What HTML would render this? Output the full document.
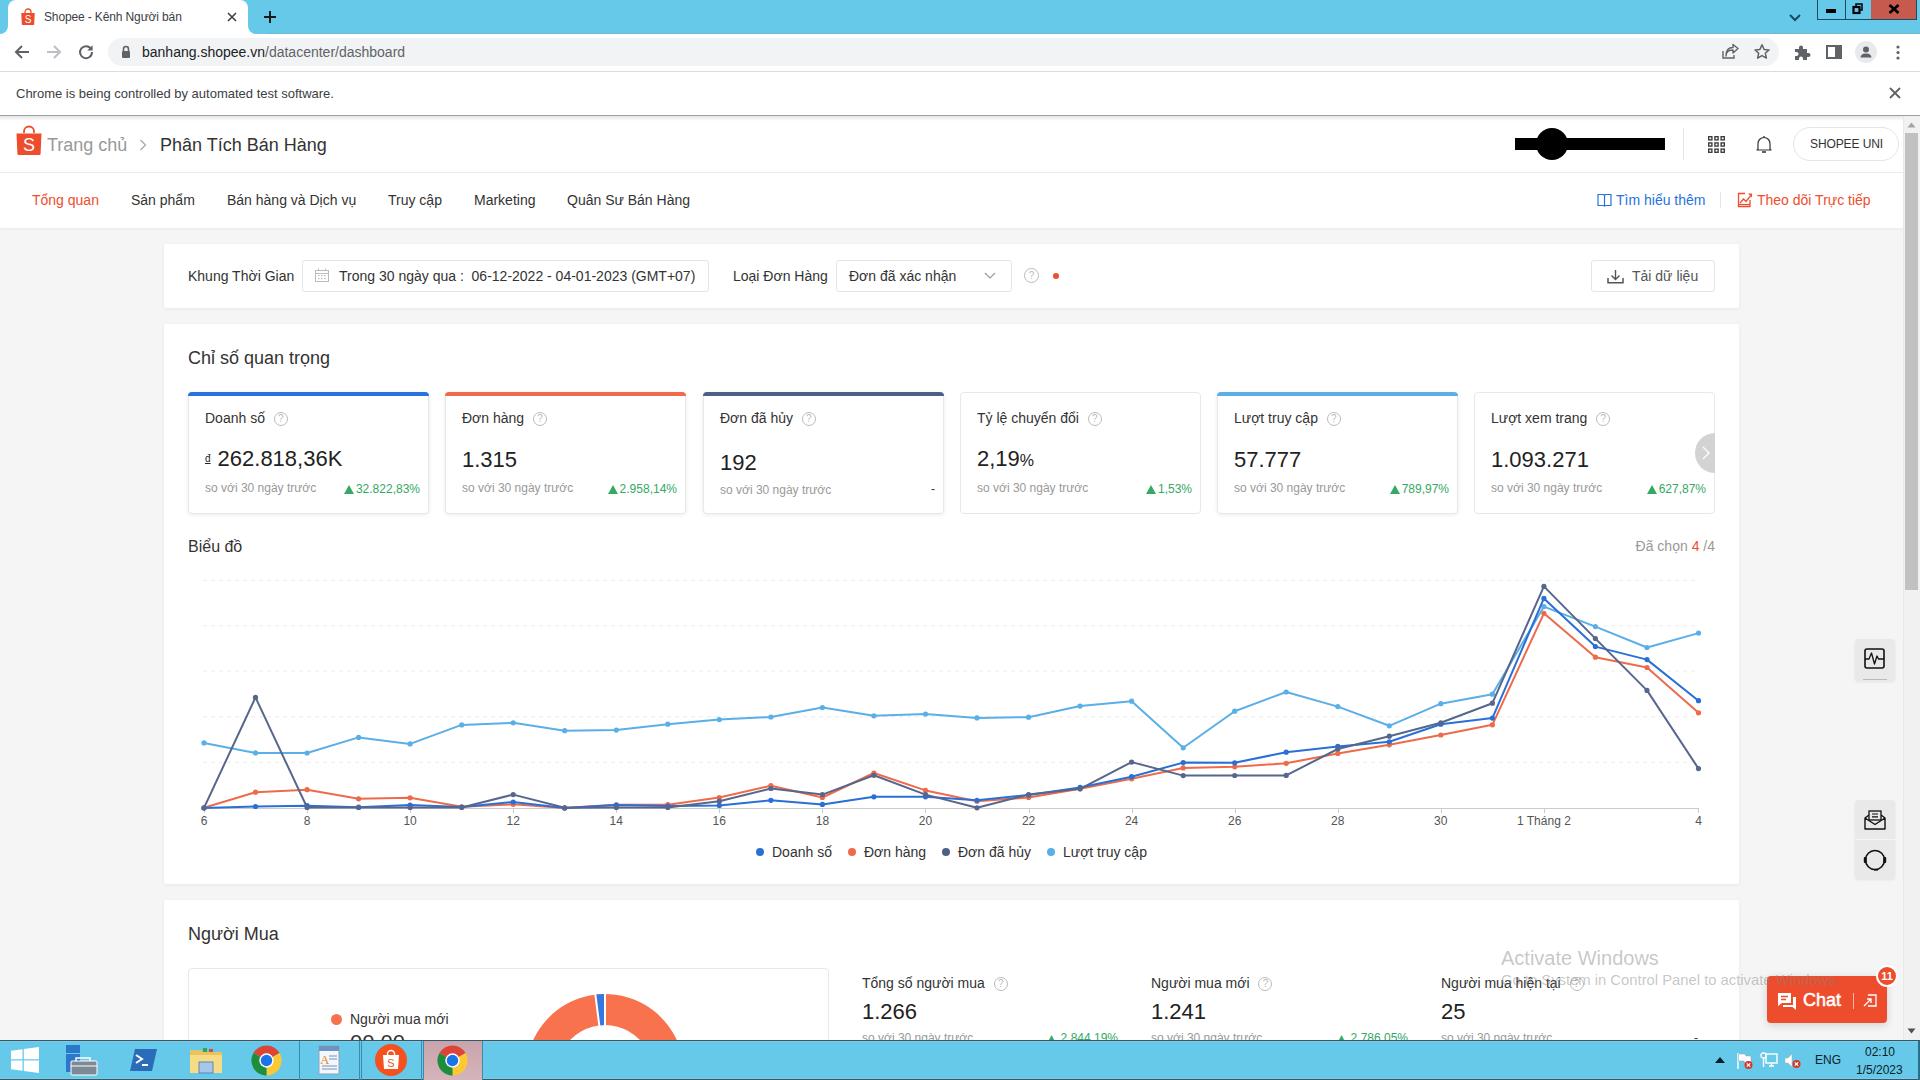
<!DOCTYPE html>
<html><head><meta charset="utf-8">
<style>
*{box-sizing:border-box;margin:0;padding:0}
html,body{width:1920px;height:1080px;overflow:hidden;background:#f5f5f5;font-family:"Liberation Sans",sans-serif;color:#333}
.a{position:absolute}
.t{position:absolute;white-space:nowrap;line-height:1}
svg{position:absolute;overflow:visible}
/* chrome */
#tabbar{left:0;top:0;width:1920px;height:34px;background:#67c9ea;border-bottom:1px solid #72b9cf}
#tab{left:8px;top:0;width:240px;height:34px;background:#fff;border-radius:8px 8px 0 0}
#addr{left:0;top:34px;width:1920px;height:37px;background:#fff}
#omni{left:108px;top:38px;width:1671px;height:28px;background:#f1f3f4;border-radius:14px}
#info{left:0;top:71px;width:1920px;height:45px;background:#fff;border-top:1px solid #dadce0;border-bottom:1px solid #a0a0a0}
/* page */
#hdr{left:0;top:116px;width:1903px;height:56px;background:#fff;box-shadow:0 1px 2px rgba(0,0,0,.06)}
#nav{left:0;top:173px;width:1903px;height:55px;background:#fff;box-shadow:0 1px 3px rgba(0,0,0,.05)}
.card{position:absolute;background:#fff;border-radius:2px;box-shadow:0 1px 4px rgba(0,0,0,.06)}
.mc{position:absolute;top:392px;width:241px;height:122px;background:#fff;border:1px solid #e8e8e8;border-radius:4px;box-shadow:0 1px 4px rgba(0,0,0,.08)}
.mc .bar{position:absolute;left:-1px;top:-1px;right:-1px;height:4px;border-radius:4px 4px 0 0}
.mc .tt{left:16px;top:18px;font-size:14px;color:#333}
.mc .v{left:16px;top:57px;font-size:22px;color:#222}
.mc .c{left:16px;top:89px;font-size:12px;color:#999}
.mc .p{right:8px;top:90px;font-size:12px;color:#35a864}
.q{display:inline-block;width:14px;height:14px;border:1px solid #bbb;border-radius:50%;font-size:10px;line-height:12px;text-align:center;color:#bbb;vertical-align:0px;margin-left:5px;position:relative;top:-1px}
#tb{left:0;top:1040px;width:1920px;height:40px;background:#67c9ea;border-top:1px solid #2e5a6a;border-bottom:1px solid #2e5a6a;box-shadow:inset 0 1px 0 #86c8e0, inset 0 -1px 0 #86c8e0}
</style></head><body>
<!-- CHROME FRAME -->
<div class="a" id="tabbar"></div>
<div class="a" style="left:0;top:24px;width:258px;height:10px;background:#fff"></div>
<div class="a" style="left:0;top:0;width:8px;height:34px;background:#67c9ea;border-bottom-right-radius:8px"></div>
<div class="a" style="left:248px;top:0;width:20px;height:34px;background:#67c9ea;border-bottom-left-radius:8px"></div>
<div class="a" id="tab"></div>
<svg style="left:20px;top:8px" width="16" height="18" viewBox="0 0 16 18"><path d="M5 5 V4 a3 3 0 0 1 6 0 V5" fill="none" stroke="#ee4d2d" stroke-width="1.3"/><path d="M1.3 5 H14.7 L14.2 16.3 Q14.1 17 13.4 17 H2.6 Q1.9 17 1.8 16.3 Z" fill="#ee4d2d"/><text x="8" y="14.6" font-size="10" font-family="Liberation Sans" fill="#fff" text-anchor="middle">S</text></svg>
<div class="t" style="left:44px;top:11px;font-size:12px;color:#3c4043;letter-spacing:-0.13px">Shopee - Kênh Người bán</div>
<svg style="left:227px;top:12px" width="10" height="10"><path d="M1 1L9 9M9 1L1 9" stroke="#3c4043" stroke-width="1.6"/></svg>
<svg style="left:263px;top:10px" width="14" height="14"><path d="M7 1V13M1 7H13" stroke="#1a1a1a" stroke-width="2"/></svg>
<svg style="left:1788px;top:13px" width="14" height="10"><path d="M2 2L7 7L12 2" fill="none" stroke="#1d4a5e" stroke-width="2"/></svg>
<div class="a" style="left:1817px;top:0;width:29px;height:20px;border:1px solid #1d4a5e;border-top:0"></div>
<div class="a" style="left:1845px;top:0;width:27px;height:20px;border:1px solid #1d4a5e;border-top:0;border-left:0"></div>
<div class="a" style="left:1871px;top:0;width:46px;height:20px;background:#c75a4e;border:1px solid #1d4a5e;border-top:0;border-left:0"></div>
<div class="a" style="left:1826px;top:9px;width:10px;height:4px;background:#000"></div>
<svg style="left:1852px;top:3px" width="12" height="12"><path d="M4 3V1H10V7H8" fill="none" stroke="#000" stroke-width="1.5"/><rect x="1.5" y="4" width="6" height="6" fill="none" stroke="#000" stroke-width="2.2"/></svg>
<svg style="left:1888px;top:4px" width="12" height="10"><path d="M1.5 1L10.5 9M10.5 1L1.5 9" stroke="#000" stroke-width="2.8"/></svg>
<div class="a" id="addr"></div>
<div class="a" id="omni"></div>
<svg style="left:14px;top:44px" width="16" height="16"><path d="M15 8H2M8 2L2 8L8 14" fill="none" stroke="#5f6368" stroke-width="2"/></svg>
<svg style="left:46px;top:44px" width="16" height="16"><path d="M1 8H14M8 2L14 8L8 14" fill="none" stroke="#bdc1c6" stroke-width="2"/></svg>
<svg style="left:78px;top:44px" width="16" height="16"><path d="M13.2 5.2A6 6 0 1 0 14 8" fill="none" stroke="#5f6368" stroke-width="2"/><path d="M14.6 1.2V6.6H9.2Z" fill="#5f6368"/></svg>
<svg style="left:121px;top:45px" width="10" height="13"><path d="M2.5 6V4a2.5 2.5 0 0 1 5 0V6" fill="none" stroke="#5f6368" stroke-width="1.6"/><rect x="1" y="6" width="8" height="7" rx="1" fill="#5f6368"/></svg>
<div class="t" style="left:142px;top:45px;font-size:14px;color:#202124">banhang.shopee.vn<span style="color:#5f6368">/datacenter/dashboard</span></div>
<svg style="left:1721px;top:44px" width="18" height="16"><path d="M2 7V14H13V11" fill="none" stroke="#5f6368" stroke-width="1.4"/><path d="M5 12C5 7 9 6 12 6V9L17 4.5L12 0.5V3.5C7 3.5 5 7 5 12Z" fill="none" stroke="#5f6368" stroke-width="1.4" stroke-linejoin="round"/></svg>
<svg style="left:1753px;top:43px" width="18" height="18"><path d="M9 1.8L11.1 6.4L16 6.9L12.3 10.2L13.4 15.1L9 12.6L4.6 15.1L5.7 10.2L2 6.9L6.9 6.4Z" fill="none" stroke="#5f6368" stroke-width="1.5" stroke-linejoin="round"/></svg>
<svg style="left:1794px;top:44px" width="17" height="16"><path d="M1 5H5V3.5a2 2 0 0 1 4 0V5H13V9H14.5a2 2 0 0 1 0 4H13V16H9V14.5a2 2 0 0 0-4 0V16H1V12H2.5a2 2 0 0 0 0-4H1Z" fill="#5f6368"/></svg>
<svg style="left:1826px;top:45px" width="16" height="14"><rect x="1" y="1" width="14" height="12" fill="none" stroke="#5f6368" stroke-width="2"/><rect x="9" y="1" width="6" height="12" fill="#5f6368"/></svg>
<div class="a" style="left:1855px;top:41px;width:22px;height:22px;border-radius:50%;background:#e8eaed"></div>
<svg style="left:1858px;top:44px" width="16" height="16"><circle cx="8" cy="5.5" r="3" fill="#5f6368"/><path d="M2.5 13.5C3 10 5.5 9.5 8 9.5S13 10 13.5 13.5Z" fill="#5f6368"/></svg>
<svg style="left:1896px;top:45px" width="4" height="15"><circle cx="2" cy="2" r="1.6" fill="#5f6368"/><circle cx="2" cy="7.5" r="1.6" fill="#5f6368"/><circle cx="2" cy="13" r="1.6" fill="#5f6368"/></svg>
<div class="a" id="info"></div>
<div class="t" style="left:16px;top:87px;font-size:13px;color:#3c4043">Chrome is being controlled by automated test software.</div>
<svg style="left:1889px;top:87px" width="12" height="12"><path d="M1 1L11 11M11 1L1 11" stroke="#5f6368" stroke-width="1.8"/></svg>

<!-- PAGE HEADER -->
<div class="a" id="hdr"></div>
<div class="a" style="left:0;top:116px;width:1903px;height:5px;background:linear-gradient(rgba(0,0,0,.10),rgba(0,0,0,0))"></div>
<svg style="left:16px;top:125px" width="26" height="31" viewBox="0 0 26 31"><path d="M8 8V6.5a5 5 0 0 1 10 0V8" fill="none" stroke="#ee4d2d" stroke-width="1.8"/><path d="M0.5 8.5H25.5L24.6 28.8Q24.5 30 23.3 30H2.7Q1.5 30 1.4 28.8Z" fill="#ee4d2d"/><text x="13" y="25.5" font-size="18" font-family="Liberation Sans" fill="#fff" text-anchor="middle">S</text></svg>
<div class="t" style="left:47px;top:136px;font-size:18px;color:#999">Trang chủ</div>
<svg style="left:139px;top:139px" width="8" height="12"><path d="M1.5 1L6.5 6L1.5 11" fill="none" stroke="#aaa" stroke-width="1.3"/></svg>
<div class="t" style="left:160px;top:136px;font-size:18px;color:#333">Phân Tích Bán Hàng</div>
<div class="a" style="left:1515px;top:138px;width:150px;height:12px;background:#000"></div>
<div class="a" style="left:1536px;top:128px;width:32px;height:32px;border-radius:50%;background:#000"></div>
<div class="a" style="left:1683px;top:128px;width:1px;height:32px;background:#e5e5e5"></div>
<svg style="left:1708px;top:136px" width="17" height="17"><g fill="none" stroke="#333" stroke-width="1.3"><rect x="0.7" y="0.7" width="3.2" height="3.2"/><rect x="6.9" y="0.7" width="3.2" height="3.2"/><rect x="13.1" y="0.7" width="3.2" height="3.2"/><rect x="0.7" y="6.9" width="3.2" height="3.2"/><rect x="6.9" y="6.9" width="3.2" height="3.2"/><rect x="13.1" y="6.9" width="3.2" height="3.2"/><rect x="0.7" y="13.1" width="3.2" height="3.2"/><rect x="6.9" y="13.1" width="3.2" height="3.2"/><rect x="13.1" y="13.1" width="3.2" height="3.2"/></g></svg>
<svg style="left:1756px;top:135px" width="16" height="19"><path d="M2 14V8.5a6 6 0 0 1 12 0V14L15 15H1Z" fill="none" stroke="#333" stroke-width="1.2" stroke-linejoin="round"/><path d="M8 1V2.5M6 17H10" stroke="#333" stroke-width="1.3"/></svg>
<div class="a" style="left:1793px;top:127px;width:106px;height:34px;border:1px solid #e5e5e5;border-radius:17px"></div>
<div class="t" style="left:1810px;top:138px;font-size:12px;color:#333;letter-spacing:-0.1px">SHOPEE UNI</div>
<div class="a" id="nav"></div>
<div class="t" style="left:32px;top:193px;font-size:14px;color:#ee4d2d">Tổng quan</div>
<div class="t" style="left:131px;top:193px;font-size:14px;color:#333">Sản phẩm</div>
<div class="t" style="left:227px;top:193px;font-size:14px;color:#333">Bán hàng và Dịch vụ</div>
<div class="t" style="left:388px;top:193px;font-size:14px;color:#333">Truy cập</div>
<div class="t" style="left:474px;top:193px;font-size:14px;color:#333">Marketing</div>
<div class="t" style="left:567px;top:193px;font-size:14px;color:#333">Quân Sư Bán Hàng</div>
<svg style="left:1597px;top:193px" width="15" height="14"><path d="M1 1.5H6.5L7.5 2.5L8.5 1.5H14V12.5H8.5L7.5 13L6.5 12.5H1Z M7.5 2.5V12.5" fill="none" stroke="#2673dd" stroke-width="1.2"/></svg>
<div class="t" style="left:1616px;top:193px;font-size:14px;color:#2673dd">Tìm hiểu thêm</div>
<div class="a" style="left:1720px;top:192px;width:1px;height:16px;background:#e5e5e5"></div>
<svg style="left:1737px;top:192px" width="16" height="16"><path d="M13 8V14.5H1.5V1.5H8" fill="none" stroke="#ee4d2d" stroke-width="1.3"/><path d="M3 11L6.5 7L9 9.5L13.5 4" fill="none" stroke="#ee4d2d" stroke-width="1.3"/><path d="M11 1.5H15V5.5Z" fill="#ee4d2d"/><path d="M1.5 12.5H13" stroke="#ee4d2d" stroke-width="1.2"/></svg>
<div class="t" style="left:1757px;top:193px;font-size:14px;color:#ee4d2d">Theo dõi Trực tiếp</div>

<!-- FILTER CARD -->
<div class="card" style="left:164px;top:244px;width:1575px;height:64px"></div>
<div class="t" style="left:188px;top:269px;font-size:14px;color:#333">Khung Thời Gian</div>
<div class="a" style="left:302px;top:260px;width:407px;height:32px;border:1px solid #e5e5e5;border-radius:3px"></div>
<svg style="left:315px;top:268px" width="15" height="15"><g fill="none" stroke="#bbb" stroke-width="1"><rect x="0.5" y="2.5" width="13" height="11"/><path d="M0.5 5.5H13.5M3.5 0.5V2.5M10.5 0.5V2.5"/></g><g fill="#bbb"><rect x="3" y="7" width="1.5" height="1.2"/><rect x="6" y="7" width="1.5" height="1.2"/><rect x="9" y="7" width="1.5" height="1.2"/><rect x="3" y="10" width="1.5" height="1.2"/><rect x="6" y="10" width="1.5" height="1.2"/><rect x="9" y="10" width="1.5" height="1.2"/></g></svg>
<div class="t" style="left:339px;top:269px;font-size:14px;color:#333">Trong 30 ngày qua :&nbsp; 06-12-2022 - 04-01-2023 (GMT+07)</div>
<div class="t" style="left:733px;top:269px;font-size:14px;color:#333">Loại Đơn Hàng</div>
<div class="a" style="left:836px;top:260px;width:176px;height:32px;border:1px solid #e5e5e5;border-radius:3px"></div>
<div class="t" style="left:849px;top:269px;font-size:14px;color:#333">Đơn đã xác nhận</div>
<svg style="left:984px;top:272px" width="12" height="8"><path d="M1 1L6 6L11 1" fill="none" stroke="#999" stroke-width="1.2"/></svg>
<div class="a" style="left:1024px;top:268px;width:15px;height:15px;border:1px solid #bbb;border-radius:50%;font-size:10px;line-height:13px;text-align:center;color:#bbb">?</div>
<div class="a" style="left:1053px;top:273px;width:6px;height:6px;border-radius:50%;background:#ee4d2d"></div>
<div class="a" style="left:1591px;top:260px;width:124px;height:32px;border:1px solid #e5e5e5;border-radius:3px"></div>
<svg style="left:1607px;top:269px" width="17" height="15"><path d="M8.5 1V10M4.5 6.5L8.5 10.5L12.5 6.5" fill="none" stroke="#555" stroke-width="1.4"/><path d="M1 9V13.8H16V9" fill="none" stroke="#555" stroke-width="1.5"/></svg>
<div class="t" style="left:1632px;top:269px;font-size:14px;color:#555">Tải dữ liệu</div>

<!-- MAIN CARD -->
<div class="card" style="left:164px;top:324px;width:1575px;height:560px"></div>
<div class="t" style="left:188px;top:349px;font-size:18px;color:#333">Chỉ số quan trọng</div>
<div class="mc" style="left:188px"><div class="bar" style="background:#2673dd"></div><div class="t tt">Doanh số <span class="q">?</span></div><div class="t v" style="top:55px"><span style="font-size:10px;vertical-align:4px;text-decoration:underline;margin-right:7px">đ</span>262.818,36K</div><div class="t c" style="top:89px">so với 30 ngày trước</div><div class="t p"><span style="display:inline-block;width:0;height:0;border-left:5px solid transparent;border-right:5px solid transparent;border-bottom:9px solid #35a864;margin-right:2px;vertical-align:-1px"></span>32.822,83%</div></div>
<div class="mc" style="left:445px"><div class="bar" style="background:#ee6a4a"></div><div class="t tt">Đơn hàng <span class="q">?</span></div><div class="t v" style="top:56px">1.315</div><div class="t c" style="top:89px">so với 30 ngày trước</div><div class="t p"><span style="display:inline-block;width:0;height:0;border-left:5px solid transparent;border-right:5px solid transparent;border-bottom:9px solid #35a864;margin-right:2px;vertical-align:-1px"></span>2.958,14%</div></div>
<div class="mc" style="left:703px"><div class="bar" style="background:#4e5f85"></div><div class="t tt">Đơn đã hủy <span class="q">?</span></div><div class="t v" style="top:59px">192</div><div class="t c" style="top:91px">so với 30 ngày trước</div><div class="t p" style="color:#333">-</div></div>
<div class="mc" style="left:960px;box-shadow:none"><div class="t tt">Tỷ lệ chuyển đổi <span class="q">?</span></div><div class="t v" style="top:55px">2,19<span style="font-size:16px">%</span></div><div class="t c" style="top:89px">so với 30 ngày trước</div><div class="t p"><span style="display:inline-block;width:0;height:0;border-left:5px solid transparent;border-right:5px solid transparent;border-bottom:9px solid #35a864;margin-right:2px;vertical-align:-1px"></span>1,53%</div></div>
<div class="mc" style="left:1217px"><div class="bar" style="background:#5aafe6"></div><div class="t tt">Lượt truy cập <span class="q">?</span></div><div class="t v" style="top:56px">57.777</div><div class="t c" style="top:89px">so với 30 ngày trước</div><div class="t p"><span style="display:inline-block;width:0;height:0;border-left:5px solid transparent;border-right:5px solid transparent;border-bottom:9px solid #35a864;margin-right:2px;vertical-align:-1px"></span>789,97%</div></div>
<div class="mc" style="left:1474px;box-shadow:none"><div class="t tt">Lượt xem trang <span class="q">?</span></div><div class="t v" style="top:56px">1.093.271</div><div class="t c" style="top:89px">so với 30 ngày trước</div><div class="t p"><span style="display:inline-block;width:0;height:0;border-left:5px solid transparent;border-right:5px solid transparent;border-bottom:9px solid #35a864;margin-right:2px;vertical-align:-1px"></span>627,87%</div></div>
<div class="a" style="left:1695px;top:433px;width:20px;height:40px;overflow:hidden"><div class="a" style="left:0;top:0;width:40px;height:40px;border-radius:50%;background:#d3d3d3"></div><svg style="left:7px;top:13px" width="8" height="14"><path d="M1 1L7 7L1 13" fill="none" stroke="#fff" stroke-width="1.4"/></svg></div>
<div class="t" style="left:188px;top:539px;font-size:16px;color:#333">Biểu đồ</div>
<div class="t" style="right:205px;top:539px;font-size:14px;color:#999">Đã chọn <span style="color:#ee4d2d">4</span> /4</div>
<svg style="left:180px;top:560px" width="1560" height="280">
<line x1="23" y1="20.299999999999955" x2="1519" y2="20.299999999999955" stroke="#ececec" stroke-width="1" stroke-dasharray="4 4"/>
<line x1="23" y1="65.79999999999995" x2="1519" y2="65.79999999999995" stroke="#ececec" stroke-width="1" stroke-dasharray="4 4"/>
<line x1="23" y1="111.20000000000005" x2="1519" y2="111.20000000000005" stroke="#ececec" stroke-width="1" stroke-dasharray="4 4"/>
<line x1="23" y1="156.79999999999995" x2="1519" y2="156.79999999999995" stroke="#ececec" stroke-width="1" stroke-dasharray="4 4"/>
<line x1="23" y1="202.29999999999995" x2="1519" y2="202.29999999999995" stroke="#ececec" stroke-width="1" stroke-dasharray="4 4"/>
<line x1="23" y1="248.5" x2="1519" y2="248.5" stroke="#ccc" stroke-width="1"/>
<line x1="24.5" y1="248" x2="24.5" y2="253" stroke="#ccc"/>
<text x="24.0" y="265" font-size="12" fill="#555" text-anchor="middle" font-family="Liberation Sans">6</text>
<line x1="127.5" y1="248" x2="127.5" y2="253" stroke="#ccc"/>
<text x="127.1" y="265" font-size="12" fill="#555" text-anchor="middle" font-family="Liberation Sans">8</text>
<line x1="230.5" y1="248" x2="230.5" y2="253" stroke="#ccc"/>
<text x="230.1" y="265" font-size="12" fill="#555" text-anchor="middle" font-family="Liberation Sans">10</text>
<line x1="333.5" y1="248" x2="333.5" y2="253" stroke="#ccc"/>
<text x="333.2" y="265" font-size="12" fill="#555" text-anchor="middle" font-family="Liberation Sans">12</text>
<line x1="436.5" y1="248" x2="436.5" y2="253" stroke="#ccc"/>
<text x="436.3" y="265" font-size="12" fill="#555" text-anchor="middle" font-family="Liberation Sans">14</text>
<line x1="539.5" y1="248" x2="539.5" y2="253" stroke="#ccc"/>
<text x="539.3" y="265" font-size="12" fill="#555" text-anchor="middle" font-family="Liberation Sans">16</text>
<line x1="642.5" y1="248" x2="642.5" y2="253" stroke="#ccc"/>
<text x="642.4" y="265" font-size="12" fill="#555" text-anchor="middle" font-family="Liberation Sans">18</text>
<line x1="745.5" y1="248" x2="745.5" y2="253" stroke="#ccc"/>
<text x="745.5" y="265" font-size="12" fill="#555" text-anchor="middle" font-family="Liberation Sans">20</text>
<line x1="849.5" y1="248" x2="849.5" y2="253" stroke="#ccc"/>
<text x="848.6" y="265" font-size="12" fill="#555" text-anchor="middle" font-family="Liberation Sans">22</text>
<line x1="952.5" y1="248" x2="952.5" y2="253" stroke="#ccc"/>
<text x="951.6" y="265" font-size="12" fill="#555" text-anchor="middle" font-family="Liberation Sans">24</text>
<line x1="1055.5" y1="248" x2="1055.5" y2="253" stroke="#ccc"/>
<text x="1054.7" y="265" font-size="12" fill="#555" text-anchor="middle" font-family="Liberation Sans">26</text>
<line x1="1158.5" y1="248" x2="1158.5" y2="253" stroke="#ccc"/>
<text x="1157.8" y="265" font-size="12" fill="#555" text-anchor="middle" font-family="Liberation Sans">28</text>
<line x1="1261.5" y1="248" x2="1261.5" y2="253" stroke="#ccc"/>
<text x="1260.8" y="265" font-size="12" fill="#555" text-anchor="middle" font-family="Liberation Sans">30</text>
<line x1="1364.5" y1="248" x2="1364.5" y2="253" stroke="#ccc"/>
<text x="1363.9" y="265" font-size="12" fill="#555" text-anchor="middle" font-family="Liberation Sans">1 Tháng 2</text>
<line x1="1518.5" y1="248" x2="1518.5" y2="253" stroke="#ccc"/>
<text x="1518.5" y="265" font-size="12" fill="#555" text-anchor="middle" font-family="Liberation Sans">4</text>
<g fill="#5aafe6"><polyline points="24.0,182.9 75.5,192.9 127.1,193.0 178.6,177.4 230.1,183.9 281.7,164.9 333.2,162.8 384.7,170.7 436.3,170.1 487.8,164.2 539.3,159.6 590.9,157.0 642.4,147.5 693.9,155.8 745.5,154.0 797.0,157.9 848.6,157.2 900.1,146.1 951.6,141.2 1003.2,187.8 1054.7,151.2 1106.2,132.0 1157.8,146.6 1209.3,165.8 1260.8,143.7 1312.4,134.2 1363.9,46.6 1415.4,66.6 1467.0,87.5 1518.5,73.1" fill="none" stroke="#5aafe6" stroke-width="2" stroke-linejoin="round"/><circle cx="24.0" cy="182.9" r="2.6"/><circle cx="75.5" cy="192.9" r="2.6"/><circle cx="127.1" cy="193.0" r="2.6"/><circle cx="178.6" cy="177.4" r="2.6"/><circle cx="230.1" cy="183.9" r="2.6"/><circle cx="281.7" cy="164.9" r="2.6"/><circle cx="333.2" cy="162.8" r="2.6"/><circle cx="384.7" cy="170.7" r="2.6"/><circle cx="436.3" cy="170.1" r="2.6"/><circle cx="487.8" cy="164.2" r="2.6"/><circle cx="539.3" cy="159.6" r="2.6"/><circle cx="590.9" cy="157.0" r="2.6"/><circle cx="642.4" cy="147.5" r="2.6"/><circle cx="693.9" cy="155.8" r="2.6"/><circle cx="745.5" cy="154.0" r="2.6"/><circle cx="797.0" cy="157.9" r="2.6"/><circle cx="848.6" cy="157.2" r="2.6"/><circle cx="900.1" cy="146.1" r="2.6"/><circle cx="951.6" cy="141.2" r="2.6"/><circle cx="1003.2" cy="187.8" r="2.6"/><circle cx="1054.7" cy="151.2" r="2.6"/><circle cx="1106.2" cy="132.0" r="2.6"/><circle cx="1157.8" cy="146.6" r="2.6"/><circle cx="1209.3" cy="165.8" r="2.6"/><circle cx="1260.8" cy="143.7" r="2.6"/><circle cx="1312.4" cy="134.2" r="2.6"/><circle cx="1363.9" cy="46.6" r="2.6"/><circle cx="1415.4" cy="66.6" r="2.6"/><circle cx="1467.0" cy="87.5" r="2.6"/><circle cx="1518.5" cy="73.1" r="2.6"/></g>
<g fill="#ee6a4a"><polyline points="24.0,247.8 75.5,232.2 127.1,229.7 178.6,238.8 230.1,237.8 281.7,246.8 333.2,244.3 384.7,248.0 436.3,244.8 487.8,244.7 539.3,237.5 590.9,225.7 642.4,237.5 693.9,213.0 745.5,230.4 797.0,241.2 848.6,237.5 900.1,228.8 951.6,218.8 1003.2,207.9 1054.7,206.8 1106.2,203.3 1157.8,193.4 1209.3,184.8 1260.8,175.0 1312.4,164.8 1363.9,53.3 1415.4,97.2 1467.0,107.5 1518.5,152.8" fill="none" stroke="#ee6a4a" stroke-width="2" stroke-linejoin="round"/><circle cx="24.0" cy="247.8" r="2.6"/><circle cx="75.5" cy="232.2" r="2.6"/><circle cx="127.1" cy="229.7" r="2.6"/><circle cx="178.6" cy="238.8" r="2.6"/><circle cx="230.1" cy="237.8" r="2.6"/><circle cx="281.7" cy="246.8" r="2.6"/><circle cx="333.2" cy="244.3" r="2.6"/><circle cx="384.7" cy="248.0" r="2.6"/><circle cx="436.3" cy="244.8" r="2.6"/><circle cx="487.8" cy="244.7" r="2.6"/><circle cx="539.3" cy="237.5" r="2.6"/><circle cx="590.9" cy="225.7" r="2.6"/><circle cx="642.4" cy="237.5" r="2.6"/><circle cx="693.9" cy="213.0" r="2.6"/><circle cx="745.5" cy="230.4" r="2.6"/><circle cx="797.0" cy="241.2" r="2.6"/><circle cx="848.6" cy="237.5" r="2.6"/><circle cx="900.1" cy="228.8" r="2.6"/><circle cx="951.6" cy="218.8" r="2.6"/><circle cx="1003.2" cy="207.9" r="2.6"/><circle cx="1054.7" cy="206.8" r="2.6"/><circle cx="1106.2" cy="203.3" r="2.6"/><circle cx="1157.8" cy="193.4" r="2.6"/><circle cx="1209.3" cy="184.8" r="2.6"/><circle cx="1260.8" cy="175.0" r="2.6"/><circle cx="1312.4" cy="164.8" r="2.6"/><circle cx="1363.9" cy="53.3" r="2.6"/><circle cx="1415.4" cy="97.2" r="2.6"/><circle cx="1467.0" cy="107.5" r="2.6"/><circle cx="1518.5" cy="152.8" r="2.6"/></g>
<g fill="#2a6fd6"><polyline points="24.0,248.0 75.5,246.5 127.1,245.7 178.6,247.2 230.1,245.0 281.7,247.0 333.2,242.0 384.7,248.0 436.3,245.0 487.8,246.0 539.3,245.4 590.9,240.3 642.4,244.4 693.9,236.8 745.5,236.8 797.0,240.3 848.6,235.0 900.1,227.4 951.6,216.7 1003.2,202.6 1054.7,202.8 1106.2,192.2 1157.8,186.4 1209.3,181.8 1260.8,164.2 1312.4,158.1 1363.9,38.4 1415.4,86.6 1467.0,99.6 1518.5,140.7" fill="none" stroke="#2a6fd6" stroke-width="2" stroke-linejoin="round"/><circle cx="24.0" cy="248.0" r="2.6"/><circle cx="75.5" cy="246.5" r="2.6"/><circle cx="127.1" cy="245.7" r="2.6"/><circle cx="178.6" cy="247.2" r="2.6"/><circle cx="230.1" cy="245.0" r="2.6"/><circle cx="281.7" cy="247.0" r="2.6"/><circle cx="333.2" cy="242.0" r="2.6"/><circle cx="384.7" cy="248.0" r="2.6"/><circle cx="436.3" cy="245.0" r="2.6"/><circle cx="487.8" cy="246.0" r="2.6"/><circle cx="539.3" cy="245.4" r="2.6"/><circle cx="590.9" cy="240.3" r="2.6"/><circle cx="642.4" cy="244.4" r="2.6"/><circle cx="693.9" cy="236.8" r="2.6"/><circle cx="745.5" cy="236.8" r="2.6"/><circle cx="797.0" cy="240.3" r="2.6"/><circle cx="848.6" cy="235.0" r="2.6"/><circle cx="900.1" cy="227.4" r="2.6"/><circle cx="951.6" cy="216.7" r="2.6"/><circle cx="1003.2" cy="202.6" r="2.6"/><circle cx="1054.7" cy="202.8" r="2.6"/><circle cx="1106.2" cy="192.2" r="2.6"/><circle cx="1157.8" cy="186.4" r="2.6"/><circle cx="1209.3" cy="181.8" r="2.6"/><circle cx="1260.8" cy="164.2" r="2.6"/><circle cx="1312.4" cy="158.1" r="2.6"/><circle cx="1363.9" cy="38.4" r="2.6"/><circle cx="1415.4" cy="86.6" r="2.6"/><circle cx="1467.0" cy="99.6" r="2.6"/><circle cx="1518.5" cy="140.7" r="2.6"/></g>
<g fill="#56668c"><polyline points="24.0,247.8 75.5,137.4 127.1,247.5 178.6,247.5 230.1,247.5 281.7,247.5 333.2,234.6 384.7,247.8 436.3,247.5 487.8,247.5 539.3,241.2 590.9,228.5 642.4,234.6 693.9,215.3 745.5,234.6 797.0,247.8 848.6,234.6 900.1,228.8 951.6,202.1 1003.2,215.6 1054.7,215.5 1106.2,215.4 1157.8,189.0 1209.3,176.2 1260.8,162.8 1312.4,143.2 1363.9,26.4 1415.4,78.6 1467.0,130.4 1518.5,208.6" fill="none" stroke="#56668c" stroke-width="2" stroke-linejoin="round"/><circle cx="24.0" cy="247.8" r="2.6"/><circle cx="75.5" cy="137.4" r="2.6"/><circle cx="127.1" cy="247.5" r="2.6"/><circle cx="178.6" cy="247.5" r="2.6"/><circle cx="230.1" cy="247.5" r="2.6"/><circle cx="281.7" cy="247.5" r="2.6"/><circle cx="333.2" cy="234.6" r="2.6"/><circle cx="384.7" cy="247.8" r="2.6"/><circle cx="436.3" cy="247.5" r="2.6"/><circle cx="487.8" cy="247.5" r="2.6"/><circle cx="539.3" cy="241.2" r="2.6"/><circle cx="590.9" cy="228.5" r="2.6"/><circle cx="642.4" cy="234.6" r="2.6"/><circle cx="693.9" cy="215.3" r="2.6"/><circle cx="745.5" cy="234.6" r="2.6"/><circle cx="797.0" cy="247.8" r="2.6"/><circle cx="848.6" cy="234.6" r="2.6"/><circle cx="900.1" cy="228.8" r="2.6"/><circle cx="951.6" cy="202.1" r="2.6"/><circle cx="1003.2" cy="215.6" r="2.6"/><circle cx="1054.7" cy="215.5" r="2.6"/><circle cx="1106.2" cy="215.4" r="2.6"/><circle cx="1157.8" cy="189.0" r="2.6"/><circle cx="1209.3" cy="176.2" r="2.6"/><circle cx="1260.8" cy="162.8" r="2.6"/><circle cx="1312.4" cy="143.2" r="2.6"/><circle cx="1363.9" cy="26.4" r="2.6"/><circle cx="1415.4" cy="78.6" r="2.6"/><circle cx="1467.0" cy="130.4" r="2.6"/><circle cx="1518.5" cy="208.6" r="2.6"/></g>
</svg>
<div class="a" style="left:756px;top:848px;width:8px;height:8px;border-radius:50%;background:#2a6fd6"></div>
<div class="t" style="left:772px;top:845px;font-size:14px;color:#333">Doanh số</div>
<div class="a" style="left:848px;top:848px;width:8px;height:8px;border-radius:50%;background:#ee6a4a"></div>
<div class="t" style="left:864px;top:845px;font-size:14px;color:#333">Đơn hàng</div>
<div class="a" style="left:942px;top:848px;width:8px;height:8px;border-radius:50%;background:#4e5f85"></div>
<div class="t" style="left:958px;top:845px;font-size:14px;color:#333">Đơn đã hủy</div>
<div class="a" style="left:1047px;top:848px;width:8px;height:8px;border-radius:50%;background:#5aafe6"></div>
<div class="t" style="left:1063px;top:845px;font-size:14px;color:#333">Lượt truy cập</div>

<!-- BUYER CARD -->
<div class="card" style="left:164px;top:900px;width:1575px;height:200px"></div>
<div class="t" style="left:188px;top:925px;font-size:18px;color:#333">Người Mua</div>
<div class="a" style="left:188px;top:968px;width:641px;height:120px;border:1px solid #e8e8e8;border-radius:4px"></div>
<div class="a" style="left:331px;top:1014px;width:11px;height:11px;border-radius:50%;background:#f8734d"></div>
<div class="t" style="left:350px;top:1012px;font-size:14px;color:#333">Người mua mới</div>
<div class="t" style="left:350px;top:1032px;font-size:22px;color:#333">00,00</div>
<svg style="left:520px;top:988px" width="170" height="170" viewBox="-85 -85 170 170"><path d="M0 -79A79 79 0 1 1 -0.01 -79L-0.01 -48A48 48 0 1 0 0 -48Z" fill="#f8734d"/><path d="M0 -79A79 79 0 0 0 -9.6 -78.4L-5.8 -47.6A48 48 0 0 1 0 -48Z" fill="#3478e0"/><path d="M0 -80V-46M-9.8 -79.5L-5.5 -46" stroke="#fff" stroke-width="2"/></svg>
<div class="t" style="left:862px;top:976px;font-size:14px;color:#333">Tổng số người mua <span class="q">?</span></div>
<div class="t" style="left:862px;top:1001px;font-size:22px;color:#222">1.266</div>
<div class="t" style="left:862px;top:1032px;font-size:12px;color:#999">so với 30 ngày trước</div>
<div class="t" style="right:802px;top:1032px;font-size:12px;color:#35a864">▲ 2.844,19%</div>
<div class="t" style="left:1151px;top:976px;font-size:14px;color:#333">Người mua mới <span class="q">?</span></div>
<div class="t" style="left:1151px;top:1001px;font-size:22px;color:#222">1.241</div>
<div class="t" style="left:1151px;top:1032px;font-size:12px;color:#999">so với 30 ngày trước</div>
<div class="t" style="right:512px;top:1032px;font-size:12px;color:#35a864">▲ 2.786,05%</div>
<div class="t" style="left:1694px;top:1032px;font-size:12px;color:#333">-</div>
<div class="t" style="left:1441px;top:976px;font-size:14px;color:#333">Người mua hiện tại <span class="q">?</span></div>
<div class="t" style="left:1441px;top:1001px;font-size:22px;color:#222">25</div>
<div class="t" style="left:1441px;top:1032px;font-size:12px;color:#999">so với 30 ngày trước</div>

<!-- SCROLLBAR -->
<div class="a" style="left:1903px;top:116px;width:17px;height:924px;background:#f1f1f1;border-left:1px solid #e8e8e8"></div>
<div class="a" style="left:1905px;top:133px;width:13px;height:457px;background:#c1c1c1"></div>
<svg style="left:1907px;top:122px" width="9" height="6"><path d="M0.5 5.5L4.5 0.5L8.5 5.5Z" fill="#a3a3a3"/></svg>
<svg style="left:1907px;top:1028px" width="9" height="6"><path d="M0.5 0.5L4.5 5.5L8.5 0.5Z" fill="#505050"/></svg>

<!-- FLOATING ICONS -->
<div class="a" style="left:1855px;top:639px;width:40px;height:42px;background:#e9e9e9;border-radius:4px;box-shadow:0 1px 3px rgba(0,0,0,.08)"></div>
<div class="a" style="left:1863px;top:679px;width:24px;height:1px;background:#bbb"></div>
<svg style="left:1864px;top:648px" width="21" height="21"><rect x="1" y="1" width="19" height="19" rx="2" fill="none" stroke="#111" stroke-width="1.6"/><path d="M1 11H5L7.5 5L10.5 16L13 8L14.5 11H20" fill="none" stroke="#111" stroke-width="1.3" stroke-linejoin="round"/></svg>
<div class="a" style="left:1855px;top:800px;width:40px;height:79px;background:#e9e9e9;border-radius:4px;box-shadow:0 1px 3px rgba(0,0,0,.08)"></div>
<svg style="left:1864px;top:810px" width="22" height="20"><path d="M1 8L5 5M17 5L21 8V19H1V8L11 14.5L21 8" fill="none" stroke="#111" stroke-width="1.4" stroke-linejoin="round"/><rect x="5" y="1" width="12" height="9" fill="#e9e9e9" stroke="#111" stroke-width="1.3"/><path d="M8 4H14M8 6.8H14" stroke="#111" stroke-width="1.2"/></svg>
<div class="a" style="left:1855px;top:839px;width:40px;height:1px;background:#f5f5f5"></div>
<svg style="left:1863px;top:848px" width="24" height="24"><circle cx="12" cy="12" r="9.5" fill="none" stroke="#111" stroke-width="1.6"/><rect x="0.8" y="9" width="3" height="6" rx="1" fill="#111"/><rect x="20.2" y="9" width="3" height="6" rx="1" fill="#111"/><path d="M11 21.8H15" stroke="#111" stroke-width="1.6"/></svg>

<!-- CHAT -->
<div class="a" style="left:1767px;top:976px;width:120px;height:47px;background:#ee4d2d;border-radius:4px;box-shadow:0 2px 8px rgba(0,0,0,.15)"></div>
<svg style="left:1777px;top:992px" width="20" height="19"><path d="M1 1H14V11H5L1 14Z" fill="#fff"/><path d="M16 5H19V18L15.5 15H6V13H16Z" fill="#fff"/><path d="M4 4.5H11M4 7.5H9" stroke="#ee4d2d" stroke-width="1.3"/></svg>
<div class="t" style="left:1803px;top:991px;font-size:18px;color:#fff;-webkit-text-stroke:0.5px #fff">Chat</div>
<div class="a" style="left:1853px;top:993px;width:1px;height:16px;background:rgba(255,255,255,.6)"></div>
<svg style="left:1863px;top:994px" width="14" height="13"><path d="M5 1H13V12H5" fill="none" stroke="#fff" stroke-width="1.3"/><path d="M1 12L8 5M4 5H8V9" fill="none" stroke="#fff" stroke-width="1.3"/></svg>
<div class="a" style="left:1876px;top:965px;width:22px;height:22px;border-radius:50%;background:#ee4d2d;border:2px solid #fff;color:#fff;font-size:11px;font-weight:bold;line-height:18px;text-align:center">11</div>

<!-- WATERMARK -->
<div class="t" style="left:1501px;top:948px;font-size:20px;color:rgba(130,130,130,.45)">Activate Windows</div>
<div class="t" style="left:1501px;top:973px;font-size:14.8px;color:rgba(130,130,130,.45)">Go to System in Control Panel to activate Windows.</div>

<!-- TASKBAR -->
<div class="a" id="tb"></div>
<svg style="left:11px;top:1047px" width="28" height="26"><path d="M0 3.8L11.5 2.2V12.3H0Z M12.8 2L28 0V12.3H12.8Z M0 13.6H11.5V23.8L0 22.2Z M12.8 13.6H28V26L12.8 24Z" fill="#fff"/></svg>
<svg style="left:64px;top:1044px" width="34" height="32"><rect x="2" y="1" width="14" height="8" fill="#2b77c9"/><rect x="2" y="10" width="14" height="18" fill="#2b77c9"/><rect x="7" y="17" width="26" height="14" rx="1" fill="#7d8a96" stroke="#fff" stroke-width="1"/><path d="M12 17V14H26V17" fill="none" stroke="#fff" stroke-width="1.5"/><path d="M7 22H33" stroke="#fff" stroke-width="1"/></svg>
<svg style="left:130px;top:1048px" width="28" height="24"><path d="M5 1H27L22 23H0Z" fill="#2a6cb8"/><path d="M6 7L12 11L6 15" fill="none" stroke="#fff" stroke-width="2"/><path d="M12 17H18" stroke="#fff" stroke-width="2"/></svg>
<svg style="left:189px;top:1046px" width="34" height="28"><path d="M1 4H12L14 6H33V27H1Z" fill="#e9c45e"/><rect x="1" y="9" width="32" height="18" fill="#f6dc85"/><rect x="10" y="16" width="14" height="11" fill="#a8c6e8" stroke="#5d87b8"/><rect x="14" y="2" width="4" height="4" fill="#3ca34a"/><rect x="20" y="3" width="4" height="3" fill="#d34b3c"/></svg>
<svg style="left:250px;top:1044px" width="33" height="33" viewBox="0 0 48 48"><path d="M24 24L4.95 13A22 22 0 0 1 43.05 13Z" fill="#db4437"/><path d="M24 24L43.05 13A22 22 0 0 1 24 46Z" fill="#fcc934"/><path d="M24 24L24 46A22 22 0 0 1 4.95 13Z" fill="#1e8e3e"/><circle cx="24" cy="24" r="10.5" fill="#fff"/><circle cx="24" cy="24" r="8.3" fill="#1a73e8"/></svg>
<div class="a" style="left:299px;top:1041px;width:1px;height:39px;background:#3b8bab"></div>
<div class="a" style="left:359px;top:1041px;width:1px;height:39px;background:#3b8bab"></div>
<div class="a" style="left:361px;top:1041px;width:1px;height:39px;background:#3b8bab"></div>
<div class="a" style="left:421px;top:1041px;width:1px;height:39px;background:#3b8bab"></div>
<div class="a" style="left:423px;top:1041px;width:60px;height:39px;background:linear-gradient(#c9a4ad,#d5b4bb);border-left:1px solid #3b8bab;border-right:1px solid #3b8bab"></div>
<svg style="left:316px;top:1045px" width="26" height="30"><rect x="3" y="1" width="20" height="28" fill="#f3f6fa" stroke="#8ca3bd"/><rect x="3" y="1" width="20" height="5" fill="#6e93c1"/><text x="4" y="19" font-size="13" font-family="Liberation Serif" fill="#e0892d">A</text><path d="M13 11H21M13 14H21M6 21H21M6 24H21" stroke="#6e93c1" stroke-width="1"/></svg>
<div class="a" style="left:375px;top:1044px;width:32px;height:32px;border-radius:50%;background:#f4511e"></div>
<svg style="left:381px;top:1049px" width="20" height="22"><path d="M6.5 6V5a3.5 3.5 0 0 1 7 0V6" fill="none" stroke="#fff" stroke-width="1.4"/><path d="M2 6H18L17 20H3Z" fill="#fff"/><text x="10" y="17.5" font-size="11" font-family="Liberation Sans" fill="#f4511e" text-anchor="middle">S</text></svg>
<svg style="left:436px;top:1044px" width="33" height="33" viewBox="0 0 48 48"><path d="M24 24L4.95 13A22 22 0 0 1 43.05 13Z" fill="#db4437"/><path d="M24 24L43.05 13A22 22 0 0 1 24 46Z" fill="#fcc934"/><path d="M24 24L24 46A22 22 0 0 1 4.95 13Z" fill="#1e8e3e"/><circle cx="24" cy="24" r="10.5" fill="#fff"/><circle cx="24" cy="24" r="8.3" fill="#1a73e8"/></svg>
<svg style="left:1715px;top:1057px" width="10" height="6"><path d="M0 6L5 0L10 6Z" fill="#0b1d26"/></svg>
<svg style="left:1736px;top:1052px" width="18" height="18"><path d="M2 1V17" stroke="#fff" stroke-width="1.4"/><path d="M2.5 2H9L10 4H15V11H9L8 9H2.5Z" fill="#fff" stroke="#999" stroke-width=".5"/><circle cx="12.5" cy="13" r="4" fill="#d23a2b"/><path d="M10.8 11.3L14.2 14.7M14.2 11.3L10.8 14.7" stroke="#fff" stroke-width="1.2"/></svg>
<svg style="left:1760px;top:1052px" width="18" height="17"><rect x="6" y="2" width="11" height="9" fill="none" stroke="#fff" stroke-width="1.4"/><path d="M9 14H14M11.5 11V14" stroke="#fff" stroke-width="1.4"/><rect x="1" y="1" width="5" height="5" rx="2" fill="none" stroke="#fff" stroke-width="1.3"/><path d="M3.5 6V15" stroke="#fff" stroke-width="1.4"/></svg>
<svg style="left:1784px;top:1052px" width="18" height="17"><path d="M1 6H4L8 2V15L4 11H1Z" fill="#fff" stroke="#aaa" stroke-width=".5"/><circle cx="12.5" cy="12" r="4" fill="#d23a2b"/><path d="M10.8 10.3L14.2 13.7M14.2 10.3L10.8 13.7" stroke="#fff" stroke-width="1.2"/></svg>
<div class="t" style="left:1815px;top:1054px;font-size:12px;color:#0b1d26">ENG</div>
<div class="t" style="left:1865px;top:1046px;font-size:12px;color:#0b1d26">02:10</div>
<div class="t" style="left:1856px;top:1064px;font-size:12px;color:#0b1d26">1/5/2023</div>
<div class="a" style="left:1918px;top:1041px;width:2px;height:39px;background:#2a6f8a"></div>
</body></html>
